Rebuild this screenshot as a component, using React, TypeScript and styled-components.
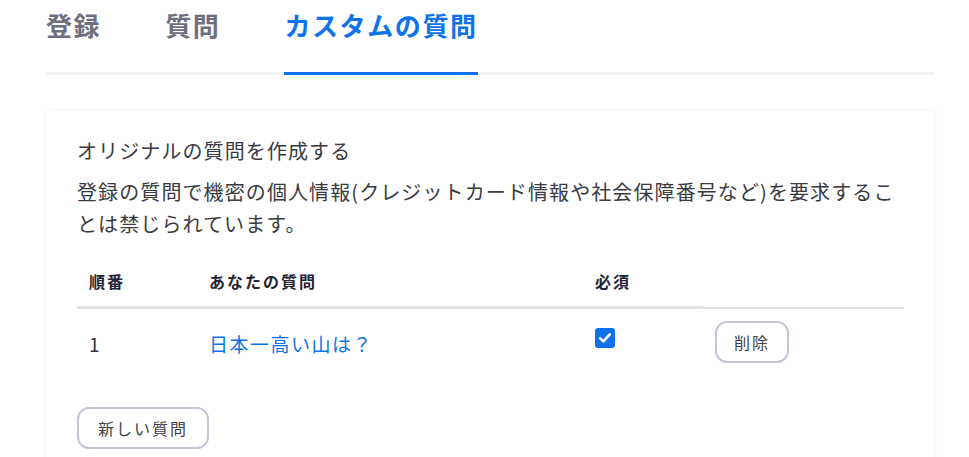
import React from "react";
import styled, { createGlobalStyle } from "styled-components";

const Global = createGlobalStyle`
  html, body { margin: 0; padding: 0; background: #ffffff; }
  body {
    font-family: "Noto Sans CJK JP", "Noto Sans", sans-serif;
    color: #333333;
    overflow: hidden;
  }
  * { box-sizing: border-box; }
`;

const Page = styled.div`
  width: 969px;
  height: 457px;
  padding: 0 35px 0 46px;
  overflow: hidden;
`;

const TabBar = styled.div`
  display: flex;
  gap: 64px;
  height: 75px;
  border-bottom: 3px solid #f2f3f6;
`;

const Tab = styled.div<{ $active?: boolean }>`
  display: flex;
  align-items: center;
  height: 75px;
  padding-bottom: 23px;
  margin-bottom: -3px;
  font-size: 26px;
  font-weight: 700;
  letter-spacing: 1.6px;
  color: ${(p) => (p.$active ? "#0e72ed" : "#6e6e7e")};
  border-bottom: 3px solid ${(p) => (p.$active ? "#0e72ed" : "transparent")};
  white-space: nowrap;
`;

const Card = styled.div`
  margin-top: 36px;
  background: #ffffff;
  box-shadow: 0 0 4px rgba(20, 20, 60, 0.07);
  padding: 24px 30px 40px 31px;
  min-height: 400px;
`;

const Title = styled.div`
  font-size: 20px;
  line-height: 32px;
  letter-spacing: 1.1px;
  color: #3a3a3f;
  margin-bottom: 9px;
`;

const Note = styled.p`
  margin: 0;
  font-size: 20px;
  line-height: 32px;
  letter-spacing: 1.1px;
  color: #3a3a3f;
`;

const Table = styled.div`
  margin-top: 16px;
  display: grid;
  grid-template-columns: 120px 386px 120px 1fr;
`;

const Head = styled.div<{ $thin?: boolean }>`
  height: 53px;
  display: flex;
  align-items: center;
  padding: 0 12px;
  font-size: 16px;
  font-weight: 700;
  letter-spacing: 2px;
  color: #232333;
  border-bottom: ${(p) => (p.$thin ? "2px solid #dedfe4" : "3px solid #e2e2e4")};
`;

const Cell = styled.div`
  height: 68px;
  display: flex;
  align-items: center;
  padding: 0 12px;
  font-size: 19px;
  color: #333338;
`;

const QuestionLink = styled.a`
  font-size: 19px;
  letter-spacing: 1.5px;
  color: #0e72ed;
  text-decoration: none;
  cursor: pointer;
`;

const Check = styled.span`
  width: 20px;
  height: 20px;
  border-radius: 3px;
  background: #0e72ed;
  display: inline-flex;
  align-items: center;
  justify-content: center;
  margin-top: -10px;
`;

const Button = styled.button<{ $wide?: boolean }>`
  height: 42px;
  padding: 0 ${(p) => (p.$wide ? "19px" : "17px")};
  border: 2px solid #c6c4d6;
  border-radius: 12px;
  background: #ffffff;
  font-family: "Noto Sans CJK JP", "Noto Sans", sans-serif;
  font-size: 16px;
  letter-spacing: 2px;
  color: #404048;
  cursor: pointer;
`;

const DeleteButton = styled(Button)`
  margin-top: -2px;
`;

const Footer = styled.div`
  margin-top: 30px;
`;

export default function App() {
  return (
    <>
      <Global />
      <Page>
        <TabBar>
          <Tab>登録</Tab>
          <Tab>質問</Tab>
          <Tab $active>カスタムの質問</Tab>
        </TabBar>
        <Card>
          <Title>オリジナルの質問を作成する</Title>
          <Note>
            登録の質問で機密の個人情報(クレジットカード情報や社会保障番号など)を要求することは禁じられています。
          </Note>
          <Table>
            <Head>順番</Head>
            <Head>あなたの質問</Head>
            <Head>必須</Head>
            <Head $thin />
            <Cell>1</Cell>
            <Cell>
              <QuestionLink>日本一高い山は？</QuestionLink>
            </Cell>
            <Cell>
              <Check>
                <svg width="14" height="14" viewBox="0 0 14 14">
                  <path
                    d="M2.2 7.4 L5.4 10.4 L11.8 3.4"
                    fill="none"
                    stroke="#ffffff"
                    strokeWidth="2.6"
                    strokeLinecap="round"
                    strokeLinejoin="round"
                  />
                </svg>
              </Check>
            </Cell>
            <Cell>
              <DeleteButton>削除</DeleteButton>
            </Cell>
          </Table>
          <Footer>
            <Button $wide>新しい質問</Button>
          </Footer>
        </Card>
      </Page>
    </>
  );
}
